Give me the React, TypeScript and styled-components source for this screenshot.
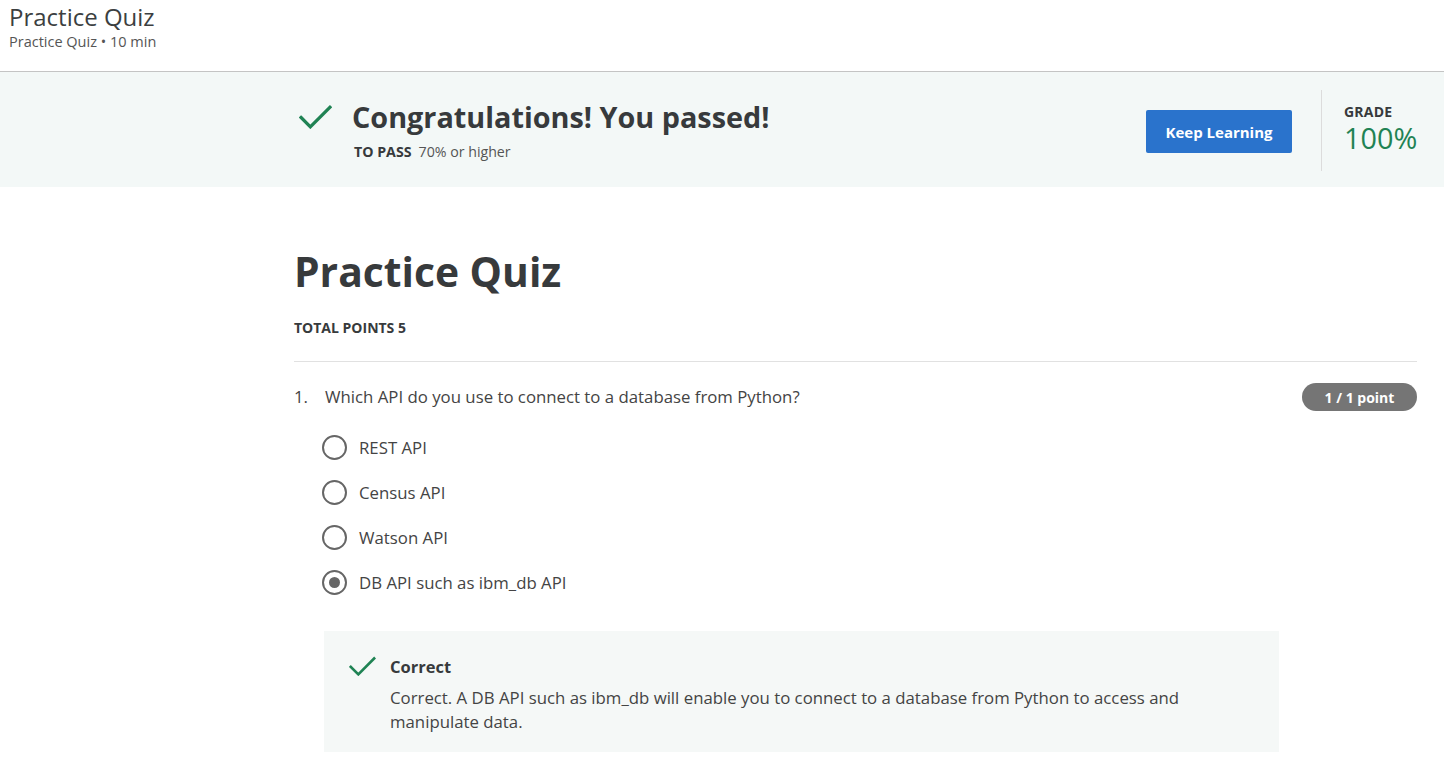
import React from "react";
import styled, { createGlobalStyle } from "styled-components";

const Global = createGlobalStyle`
  html, body { margin: 0; padding: 0; background: #fff; }
  body { font-family: "Open Sans", "Noto Sans", sans-serif; color: #373a3c; }
  * { box-sizing: border-box; }
`;

const Page = styled.div`
  width: 1444px;
  min-height: 767px;
  overflow: hidden;
`;

const TopBar = styled.header`
  height: 72px;
  padding: 1px 9px 0;
  border-bottom: 1px solid #c4c4c4;
`;

const TopTitle = styled.div`
  font-size: 24px;
  line-height: 32px;
  color: #3c3f41;
`;

const TopSub = styled.div`
  font-size: 14.5px;
  line-height: 18px;
  color: #555;
`;

const Banner = styled.section`
  height: 115px;
  background: #f3f8f7;
  display: flex;
  align-items: center;
  padding: 0 27px 0 294px;
`;

const BannerMain = styled.div`
  flex: 1;
  display: flex;
  align-items: flex-start;
  gap: 18px;
  padding-left: 5px;
`;

const BannerIcon = styled.div`
  width: 35px;
  padding-top: 6px;
`;

const BannerText = styled.div`
  display: flex;
  flex-direction: column;
`;

const BannerHeading = styled.h2`
  margin: 0;
  font-size: 28.8px;
  line-height: 38px;
  font-weight: 700;
  color: #373a3c;
`;

const PassLine = styled.div`
  margin-top: 7px;
  font-size: 14.2px;
  line-height: 18px;
  color: #555;
  padding-left: 2px;
`;

const PassLabel = styled.span`
  font-weight: 700;
  color: #373a3c;
  margin-right: 7px;
`;

const PrimaryButton = styled.button`
  width: 146px;
  height: 43px;
  border: none;
  border-radius: 2px;
  background: #2a73cc;
  color: #fff;
  font-family: inherit;
  font-size: 15px;
  font-weight: 700;
  margin-right: 29px;
  margin-top: 4px;
`;

const GradeBox = styled.div`
  height: 81px;
  border-left: 1px solid #dcdcdc;
  padding: 13px 0 0 22px;
  width: 96px;
  margin-top: 1px;
`;

const GradeLabel = styled.div`
  font-size: 14px;
  font-weight: 700;
  line-height: 18px;
  letter-spacing: 0.2px;
  color: #373a3c;
`;

const GradeValue = styled.div`
  font-size: 28.8px;
  line-height: 34px;
  color: #1f8354;
`;

const Content = styled.main`
  padding: 0 27px 0 294px;
`;

const QuizTitle = styled.h1`
  margin: 54px 0 0;
  font-size: 40.8px;
  line-height: 60px;
  font-weight: 700;
  color: #373a3c;
`;

const TotalPoints = styled.div`
  margin-top: 18px;
  font-size: 14px;
  font-weight: 700;
  line-height: 18px;
  color: #373a3c;
  padding-bottom: 24px;
  border-bottom: 1px solid #e1e1e1;
`;

const QuestionRow = styled.div`
  display: flex;
  align-items: flex-start;
  margin-top: 22px;
`;

const QNum = styled.div`
  width: 31px;
  font-size: 16.8px;
  line-height: 26px;
  color: #444;
`;

const QText = styled.div`
  flex: 1;
  font-size: 16.8px;
  line-height: 26px;
  color: #444;
`;

const Badge = styled.div`
  height: 28px;
  width: 115px;
  border-radius: 14px;
  background: #757575;
  color: #fff;
  font-size: 14px;
  font-weight: 700;
  display: flex;
  align-items: center;
  justify-content: center;
  margin-top: -1px;
`;

const Options = styled.div`
  display: flex;
  flex-direction: column;
  gap: 19px;
  padding-left: 28px;
  margin-top: 23px;
`;

const Option = styled.label`
  display: flex;
  align-items: center;
  gap: 12px;
  height: 26px;
  font-size: 16.8px;
  color: #444;
`;

const Radio = styled.span<{ $checked?: boolean }>`
  width: 25px;
  height: 25px;
  border-radius: 50%;
  border: 2px solid #666;
  display: flex;
  align-items: center;
  justify-content: center;
  &::after {
    content: "";
    width: 11px;
    height: 11px;
    border-radius: 50%;
    background: #666;
    display: ${(p) => (p.$checked ? "block" : "none")};
  }
`;

const Feedback = styled.div`
  margin: 36px 0 0 30px;
  width: 955px;
  background: #f5f8f7;
  padding: 23px 40px 18px 25px;
  display: flex;
  gap: 14px;
`;

const FeedbackIcon = styled.div`
  width: 27px;
  padding-top: 2px;
`;

const FeedbackBody = styled.div`
  flex: 1;
`;

const FeedbackTitle = styled.div`
  font-size: 16.5px;
  font-weight: 700;
  line-height: 26px;
  color: #373a3c;
`;

const FeedbackText = styled.div`
  margin-top: 6px;
  font-size: 16.8px;
  line-height: 24px;
  color: #444;
`;

const Check = ({ w, h }: { w: number; h: number }) => (
  <svg width={w} height={h} viewBox="0 0 32 24" fill="none">
    <path d="M2 13 L11 22 L30 3" stroke="#1f8354" strokeWidth="3.2" strokeLinecap="square" />
  </svg>
);

const options = [
  { label: "REST API", checked: false },
  { label: "Census API", checked: false },
  { label: "Watson API", checked: false },
  { label: "DB API such as ibm_db API", checked: true },
];

export default function App() {
  return (
    <Page>
      <Global />
      <TopBar>
        <TopTitle>Practice Quiz</TopTitle>
        <TopSub>Practice Quiz • 10 min</TopSub>
      </TopBar>
      <Banner>
        <BannerMain>
          <BannerIcon>
            <Check w={33} h={25} />
          </BannerIcon>
          <BannerText>
            <BannerHeading>Congratulations! You passed!</BannerHeading>
            <PassLine>
              <PassLabel>TO PASS</PassLabel>70% or higher
            </PassLine>
          </BannerText>
        </BannerMain>
        <PrimaryButton>Keep Learning</PrimaryButton>
        <GradeBox>
          <GradeLabel>GRADE</GradeLabel>
          <GradeValue>100%</GradeValue>
        </GradeBox>
      </Banner>
      <Content>
        <QuizTitle>Practice Quiz</QuizTitle>
        <TotalPoints>TOTAL POINTS 5</TotalPoints>
        <QuestionRow>
          <QNum>1.</QNum>
          <QText>Which API do you use to connect to a database from Python?</QText>
          <Badge>1 / 1 point</Badge>
        </QuestionRow>
        <Options>
          {options.map((o) => (
            <Option key={o.label}>
              <Radio $checked={o.checked} />
              {o.label}
            </Option>
          ))}
        </Options>
        <Feedback>
          <FeedbackIcon>
            <Check w={27} h={20} />
          </FeedbackIcon>
          <FeedbackBody>
            <FeedbackTitle>Correct</FeedbackTitle>
            <FeedbackText>
              Correct. A DB API such as ibm_db will enable you to connect to a database from Python to access and manipulate data.
            </FeedbackText>
          </FeedbackBody>
        </Feedback>
      </Content>
    </Page>
  );
}
